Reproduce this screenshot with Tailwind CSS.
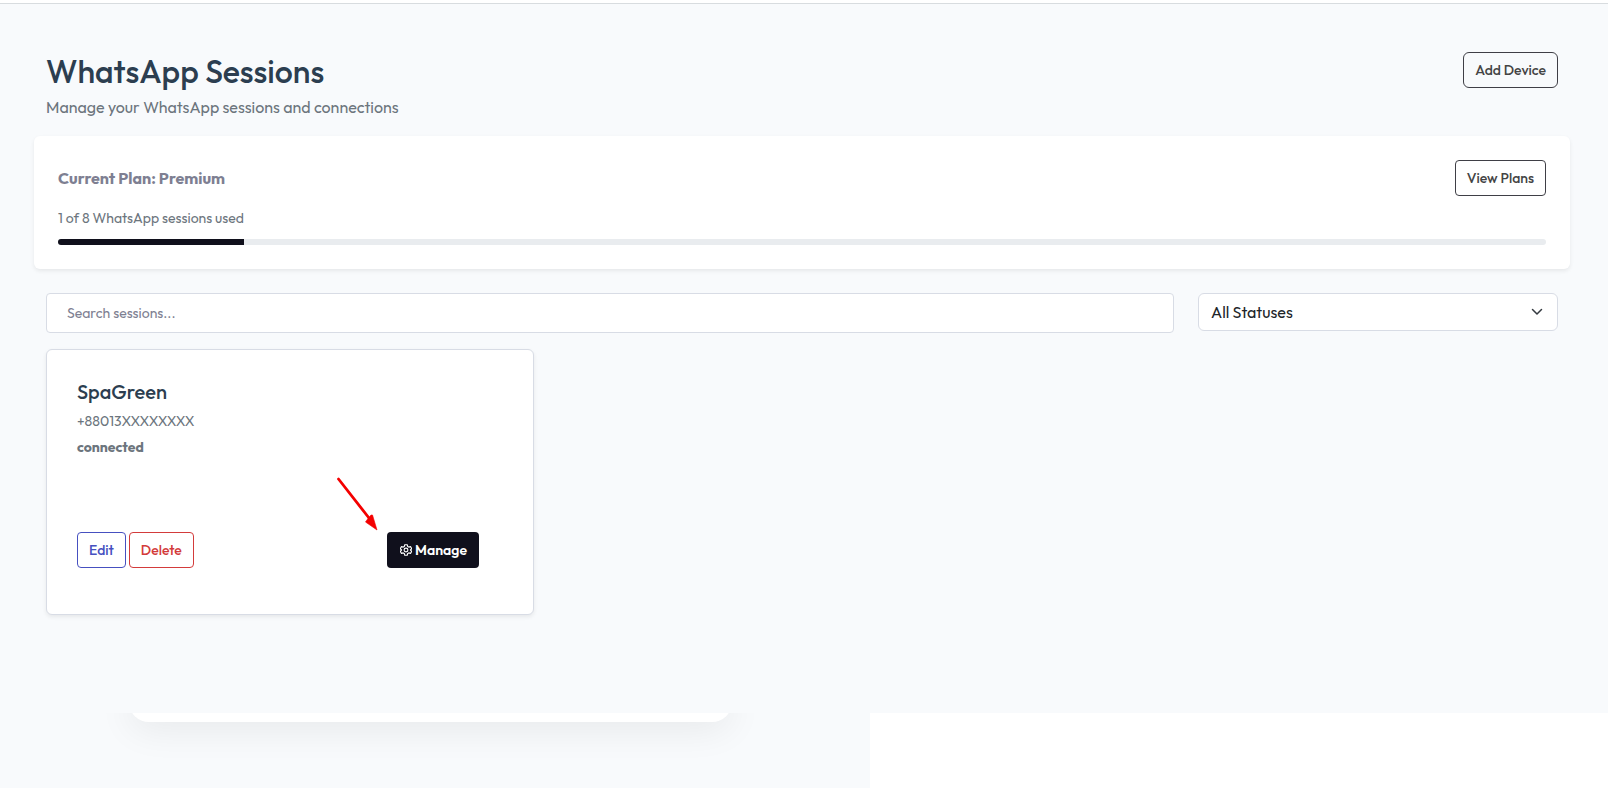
<!DOCTYPE html>
<html lang="en">

<head>
    <meta charset="UTF-8">
    <meta name="viewport" content="width=device-width, initial-scale=1.0">
    <title>WhatsApp Sessions</title>
    <script src="https://cdn.jsdelivr.net/npm/@tailwindcss/browser@4"></script>
</head>

<body class="bg-white min-h-screen flex flex-col font-['Outfit','Lato',sans-serif] text-sm text-[#6c757d]">
    <header class="h-1 shrink-0 bg-white border-b border-[#d8dcdf]"></header>

    <main class="bg-[#f8fafc] pl-[34px] pr-[38px] pt-12 pb-[98px]">
        <div class="px-3 mb-[17px] flex items-start justify-between">
            <div>
                <h1 class="text-[32px] leading-[38px] font-medium text-[#2c3e50]">WhatsApp Sessions</h1>
                <p class="mt-[5px] text-base">Manage your WhatsApp sessions and connections</p>
            </div>
            <button type="button" class="h-9 px-[11px] border border-[#3f3f46] rounded-md font-medium text-[#444]">Add Device</button>
        </div>

        <section class="bg-white rounded-md shadow-[0_2px_4px_rgba(0,0,0,0.075)] p-6 mb-6">
            <div class="flex items-center justify-between">
                <h2 class="text-base font-bold text-[#7e7f92]">Current Plan: Premium</h2>
                <button type="button" class="h-9 px-[11px] border border-[#3f3f46] rounded font-medium text-[#444]">View Plans</button>
            </div>
            <p class="mt-3 leading-[21px]">1 of 8 WhatsApp sessions used</p>
            <div class="mt-2.5 h-1.5 rounded-full bg-[#e9ecef] overflow-hidden">
                <div class="h-full bg-[#10101c]" style="width: 12.5%"></div>
            </div>
        </section>

        <div class="px-3 mb-4 flex items-start gap-6">
            <input type="text" aria-label="Search sessions" placeholder="Search sessions..."
                class="flex-1 h-10 px-5 bg-white border border-[#d8dce5] rounded placeholder:text-[#7e7f92]">
            <div class="relative w-[360px]">
                <select aria-label="Status"
                    class="w-full h-[38px] pl-3 pr-9 bg-white border border-[#d8dce5] rounded-md appearance-none text-base text-[#212529]">
                    <option>All Statuses</option>
                    <option>Connected</option>
                    <option>Disconnected</option>
                </select>
                <svg class="absolute right-[13px] top-[11px] size-4 pointer-events-none" viewBox="0 0 16 16" fill="none"
                    stroke="#343a40" stroke-width="1.5" stroke-linecap="round" stroke-linejoin="round">
                    <path d="M3.5 5.500l4.500 4.500 4.500-4.500" />
                </svg>
            </div>
        </div>

        <div class="grid grid-cols-3 gap-6 px-3">
            <article class="relative bg-white border border-[#d8dce5] rounded-md shadow-[0_2px_4px_rgba(0,0,0,0.075)] px-[30px] pt-[30px] pb-[46px]">
                <h3 class="text-xl leading-6 font-medium text-[#2c3e50]">SpaGreen</h3>
                <p class="mt-[7px] leading-[21px]">+88013XXXXXXXX</p>
                <p class="mt-[5px] leading-[21px] font-bold">connected</p>
                <div class="mt-[74px] pr-6 flex items-center">
                    <button type="button" class="h-9 px-[11px] border border-[#4650c0] rounded font-medium text-[#4650c0]">Edit</button>
                    <button type="button" class="ml-[3px] h-9 px-[11px] border border-[#d33b3b] rounded font-medium text-[#d33b3b]">Delete</button>
                    <button type="button" class="ml-auto h-9 pl-[13px] pr-3 rounded bg-[#10101c] font-semibold text-white flex items-center gap-[3px]">
                        <svg class="size-3" viewBox="0 0 24 24" fill="none" stroke="currentColor" stroke-width="2.2" stroke-linejoin="round">
                            <path d="M9.5 1.5h5l.8 3.4 2.3 1.3 3.4-1 2.4 4.2-2.5 2.6 2.5 2.6-2.4 4.2-3.4-1-2.3 1.3-.8 3.4h-5l-.8-3.4-2.3-1.3-3.4 1L.6 14.6l2.5-2.6L.6 9.4 3 5.200l3.400 1 2.300-1.300z" />
                            <circle cx="12" cy="12" r="3.8" />
                        </svg>
                        Manage
                    </button>
                </div>
                <!-- pointer to the manage button -->
                <svg class="absolute left-[288px] top-[126px] w-[44px] h-[56px]" viewBox="0 0 44 56">
                    <path d="M3.500 3L34 42" stroke="#f40000" stroke-width="2.8" stroke-linecap="round" />
                    <path d="M30.500 46l2.500-3.500 3-3.500 1.500 0 4.500 15z" fill="#f40000" stroke="#f40000" stroke-width=".6" />
                </svg>
            </article>
        </div>
    </main>

    <section class="flex-1 w-[54.1%] bg-[#f8fafc] overflow-hidden">
        <div class="ml-[14.8%] w-[69.4%] h-10 -mt-[31px] bg-white rounded-[20px] shadow-[0_8px_36px_rgba(0,0,0,0.07)]"></div>
    </section>
</body>

</html>
